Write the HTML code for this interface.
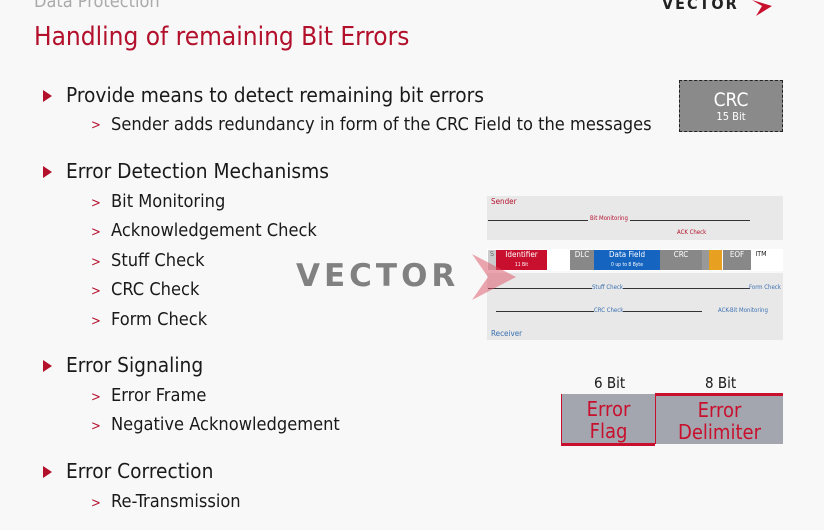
<!DOCTYPE html>
<html><head><style>
body{margin:0;width:824px;height:530px;background:#f8f8f8;position:relative;overflow:hidden;font-family:"DejaVu Sans Condensed","DejaVu Sans","Liberation Sans",sans-serif;color:#1a1a1a}
.a{position:absolute;white-space:nowrap}
.h1{font-size:20.7px}
.h2{font-size:18.1px}
.tri{position:absolute;width:0;height:0;border-left:9px solid #b3102c;border-top:6px solid transparent;border-bottom:6px solid transparent}
.gt{color:#b3102c;font-size:13px;position:absolute}
.d{position:absolute;font-size:7px;color:#fff;text-align:center;box-sizing:border-box}
</style></head><body>
<div class="a" style="left:34px;top:-9px;font-size:18px;color:#aaa">Data Protection</div>
<div class="a" style="left:662px;top:-6px;font-size:16px;font-weight:bold;letter-spacing:2px;color:#222">VECTOR</div>
<svg class="a" style="left:750px;top:0" width="28" height="18"><path d="M2 0 L22 6 L6 16 L12 6 Z" fill="#c8102e"/></svg>
<div class="a" style="left:34px;top:22px;font-size:26px;color:#b3102c">Handling of remaining Bit Errors</div>

<div class="tri" style="left:43px;top:90px"></div><div class="a h1" style="left:66px;top:83px">Provide means to detect remaining bit errors</div>
<span class="gt" style="left:91px;top:118px">&gt;</span><div class="a h2" style="left:111px;top:114px">Sender adds redundancy in form of the CRC Field to the messages</div>

<div class="tri" style="left:43px;top:166px"></div><div class="a h1" style="left:66px;top:159px">Error Detection Mechanisms</div>
<span class="gt" style="left:91px;top:196px">&gt;</span><div class="a h2" style="left:111px;top:191px">Bit Monitoring</div>
<span class="gt" style="left:91px;top:225px">&gt;</span><div class="a h2" style="left:111px;top:220px">Acknowledgement Check</div>
<span class="gt" style="left:91px;top:255px">&gt;</span><div class="a h2" style="left:111px;top:250px">Stuff Check</div>
<span class="gt" style="left:91px;top:284px">&gt;</span><div class="a h2" style="left:111px;top:279px">CRC Check</div>
<span class="gt" style="left:91px;top:314px">&gt;</span><div class="a h2" style="left:111px;top:309px">Form Check</div>

<div class="tri" style="left:43px;top:360px"></div><div class="a h1" style="left:66px;top:353px">Error Signaling</div>
<span class="gt" style="left:91px;top:390px">&gt;</span><div class="a h2" style="left:111px;top:385px">Error Frame</div>
<span class="gt" style="left:91px;top:419px">&gt;</span><div class="a h2" style="left:111px;top:414px">Negative Acknowledgement</div>

<div class="tri" style="left:43px;top:466px"></div><div class="a h1" style="left:66px;top:459px">Error Correction</div>
<span class="gt" style="left:91px;top:496px">&gt;</span><div class="a h2" style="left:111px;top:491px">Re-Transmission</div>

<div class="a" style="left:679px;top:80px;width:104px;height:52px;background:#8a8a8a;border:1px dashed #222;box-sizing:border-box;color:#fff;text-align:center">
<div style="font-size:19px;margin-top:9px;line-height:20px">CRC</div><div style="font-size:11px">15 Bit</div></div>

<div class="a" style="left:487px;top:196px;width:296px;height:44px;background:#e8e8e8"></div>
<div class="a" style="left:491px;top:197px;font-size:8px;color:#b3102c">Sender</div>
<div class="a" style="left:488px;top:220px;width:262px;height:0;border-top:1px solid #333"></div>
<div class="a" style="left:588px;top:215px;font-size:6px;color:#b3102c;background:#e8e8e8;padding:0 2px">Bit Monitoring</div>
<div class="a" style="left:677px;top:229px;font-size:6px;color:#b3102c">ACK Check</div>
<div class="a" style="left:487px;top:249px;width:296px;height:22px;background:#fff"></div>
<div class="d" style="left:488px;top:250px;width:8px;height:20px;background:#ccc;color:#666">S</div>
<div class="d" style="left:496px;top:250px;width:51px;height:20px;background:#c8102e;font-size:8px">Identifier<br><span style="font-size:5px">11 Bit</span></div>
<div class="d" style="left:570px;top:250px;width:24px;height:20px;background:#888;font-size:8px">DLC</div>
<div class="d" style="left:594px;top:250px;width:66px;height:20px;background:#1565c0;font-size:8px">Data Field<br><span style="font-size:5px">0 up to 8 Byte</span></div>
<div class="d" style="left:660px;top:250px;width:42px;height:20px;background:#888;font-size:8px">CRC</div>
<div class="d" style="left:702px;top:250px;width:7px;height:20px;background:#999"></div>
<div class="d" style="left:709px;top:250px;width:7px;height:20px;background:#e8a020"></div>
<div class="d" style="left:716px;top:250px;width:6px;height:20px;background:#e8a020"></div>
<div class="d" style="left:723px;top:250px;width:28px;height:20px;background:#888;font-size:8px">EOF</div>
<div class="d" style="left:751px;top:250px;width:20px;height:20px;background:#fff;color:#222;font-size:7px">ITM</div>
<div class="a" style="left:487px;top:273px;width:296px;height:67px;background:#e8e8e8"></div>
<div class="a" style="left:488px;top:288px;width:262px;border-top:1px solid #333"></div>
<div class="a" style="left:592px;top:284px;font-size:6px;color:#3a6fb0;background:#e8e8e8">Stuff Check</div>
<div class="a" style="left:749px;top:284px;font-size:6px;color:#3a6fb0">Form Check</div>
<div class="a" style="left:496px;top:311px;width:206px;border-top:1px solid #333"></div>
<div class="a" style="left:594px;top:307px;font-size:6px;color:#3a6fb0;background:#e8e8e8">CRC Check</div>
<div class="a" style="left:718px;top:307px;font-size:6px;color:#3a6fb0">ACK-Bit Monitoring</div>
<div class="a" style="left:491px;top:329px;font-size:8px;color:#3a6fb0">Receiver</div>
<div class="a" style="left:296px;top:258px;font-size:31px;font-weight:bold;letter-spacing:4px;color:rgba(90,90,90,0.75);font-family:'DejaVu Sans',sans-serif">VECTOR</div>
<svg class="a" style="left:470px;top:252px" width="50" height="50"><path d="M2 2 L46 25 L2 48 L18 25 Z" fill="rgba(220,80,100,0.5)"/></svg>

<div class="a" style="left:594px;top:374px;font-size:15px">6 Bit</div>
<div class="a" style="left:705px;top:374px;font-size:15px">8 Bit</div>
<div class="a" style="left:561px;top:394px;width:94px;height:52px;background:#a3a6ae;border-left:1px solid #c8102e;border-bottom:3px solid #c8102e;box-sizing:border-box;color:#c8102e;text-align:center;font-size:20px;line-height:22px;padding-top:4px">Error<br>Flag</div>
<div class="a" style="left:655px;top:393px;width:128px;height:51px;background:#a3a6ae;border-top:3px solid #c8102e;border-left:1px solid #c8102e;box-sizing:border-box;color:#c8102e;text-align:center;font-size:20px;line-height:22px;padding-top:3px">Error<br>Delimiter</div>
</body></html>
